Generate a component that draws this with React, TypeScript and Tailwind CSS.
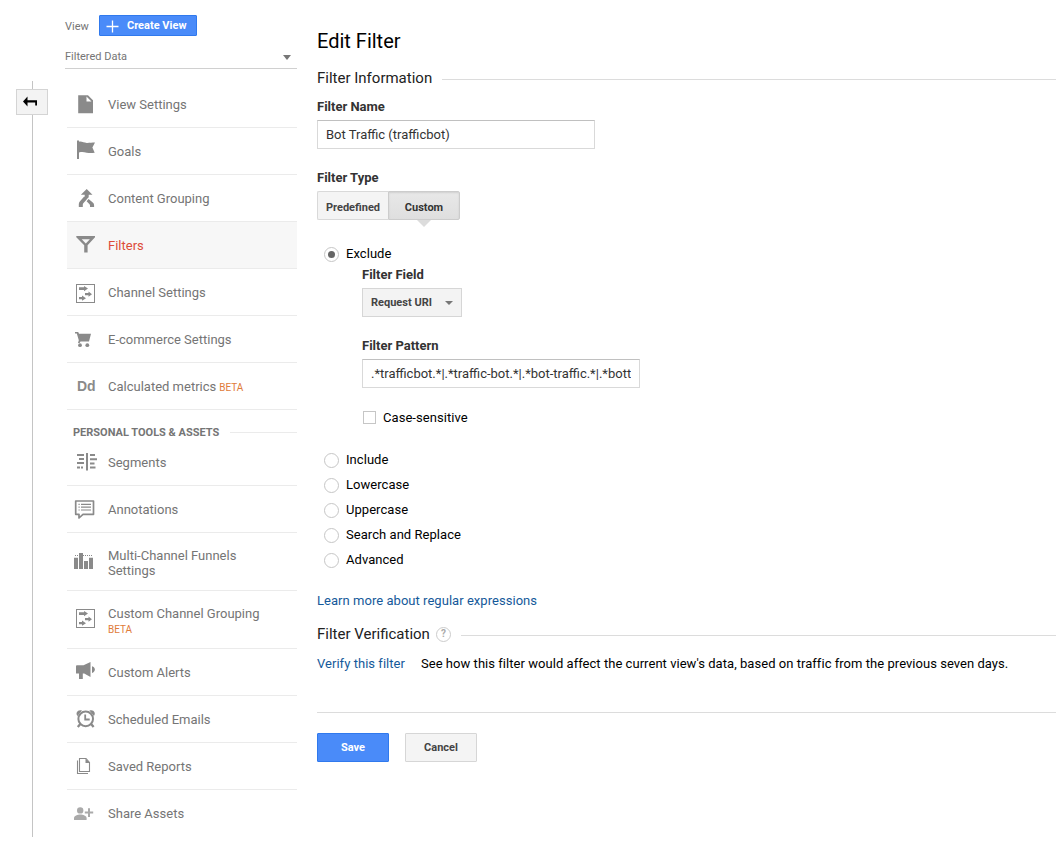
import React, { useState } from 'react';
import clsx from 'clsx';

type IconProps = { children: React.ReactNode };

function Icon({ children }: IconProps) {
  return (
    <svg width="24" height="24" viewBox="0 0 24 24" fill="currentColor" className="ml-1.5 shrink-0">
      {children}
    </svg>
  );
}

const channelIcon = (
  <Icon>
    <rect x="3.5" y="4.5" width="18" height="18" fill="none" stroke="currentColor" />
    <path d="M6 7.300h5V6l4 2.600-4 2.600V9.900H6zM12 13.100h3.500v-1.500l3.500 2.600-3.500 2.600v-1.500H12zM6 17.100h3v-1.500l4 2.600-4 2.600v-1.500H6z" />
  </Icon>
);

const icons = {
  file: (
    <Icon>
      <path d="M5.200 3.200H15l5 5v13H5.200zM13.500 4.500v5h5z" fillRule="evenodd" />
    </Icon>
  ),
  flag: (
    <Icon>
      <path d="M4 1.500h2v1.200c3-.6 5 1.300 8 1.200 3 0 5-.4 8-.4l-2.600 5 2.300 5.200c-3 .5-5 .6-8 0-3-.7-5-.9-7.700-.2V20H4z" />
    </Icon>
  ),
  merge: (
    <Icon>
      <path d="M13.700 3l5.800 5.700h-3.800v2.600l-2 1.900-2-1.900V8.700H7.900zM11.200 10.600l2.700 2.700-3.600 4c-.4.400-.5.900-.5 1.600V21H5.800v-2.800c0-1.100.3-1.900 1-2.600zM15.600 13l3.900 3.300c1.100.9 1.600 1.700 1.600 3.100V21H17v-1.400c0-.8-.2-1.200-.7-1.700l-2.700-2.700z" />
    </Icon>
  ),
  filter: (
    <Icon>
      <path d="M3.300 3H22v1.200l-7.400 8v7.300h-3.400v-7.300l-7.900-8zM8.700 6.200l4.100 4.300 4.100-4.300z" fillRule="evenodd" />
    </Icon>
  ),
  channel: channelIcon,
  cart: (
    <Icon>
      <path d="M2 5h3.200l.8 1.800h12L16 14.500H7.500L6.500 16H5l.8-2.700L3.800 6.600H2z" />
      <circle cx="7" cy="18.200" r="1.900" />
      <circle cx="14.300" cy="18.200" r="1.900" />
    </Icon>
  ),
  metric: (
    <span className="ml-1.5 flex h-6 w-6 shrink-0 items-center pl-1 font-['Liberation_Sans',sans-serif] text-sm font-bold">Dd</span>
  ),
  segments: (
    <Icon>
      <path d="M4 4h7v2H4zM6 8h5v2H6zM4 12h7v2H4zM4 16.500h3v2H4zM8 16.500h2v2H8zM13 3h2v17.500h-2zM17 4h5v2h-5zM17 8.300h7v2h-7zM17 12.500h4.500v2H17zM17 16.500h5.500v2H17z" />
    </Icon>
  ),
  note: (
    <Icon>
      <path d="M2.700 4h17.800v13.300H10L6 21v-3.700H2.700z" fill="none" stroke="currentColor" strokeWidth="1.700" strokeLinejoin="round" />
      <path d="M5.500 6.800h1.200v1.200H5.500zM8 6.800h10v1.200H8zM5.500 9.600h1.200v1.200H5.500zM8 9.600h10v1.200H8zM5.500 12.400h1.200v1.200H5.500zM8 12.400h10v1.200H8z" />
    </Icon>
  ),
  bars: (
    <Icon>
      <path d="M1 10.700h4V22H1zM6 6h4v16H6zM11 14h4v8h-4zM16 10.700h4V22h-4z" />
      <path d="M2 8.500h18" stroke="currentColor" strokeDasharray="1 1" />
    </Icon>
  ),
  alert: (
    <Icon>
      <path d="M3 6.500c0-.8.400-1.200 1.200-1.200h6.300L17.500 2v15l-6.300-3.400H9.800V19H6v-5.400H3zM19 6.200c1.800.6 2.900 1.700 2.900 3.300S20.800 12.300 19 13z" />
    </Icon>
  ),
  alarm: (
    <Icon>
      <circle cx="12.700" cy="11.900" r="7.300" fill="none" stroke="currentColor" strokeWidth="2" />
      <path d="M12.200 7.500v5h4.500" fill="none" stroke="currentColor" strokeWidth="1.800" />
      <path d="M7.300 17l-2.500 3M18.100 17l2.500 3" stroke="currentColor" strokeWidth="2.300" />
      <path d="M4.500 8.900C1.900 5.700 5.200 1.800 9 3.600zM20.900 8.900c2.600-3.200-.7-7.100-4.500-5.300z" />
    </Icon>
  ),
  reports: (
    <Icon>
      <path d="M6.500 4.500h6.500l3.500 4v9h-10zM4.500 6.500v13h10.500" fill="none" stroke="currentColor" strokeWidth="1.100" />
      <path d="M12.500 4.500v4.500h4.500z" />
    </Icon>
  ),
  share: (
    <Icon>
      <g fill="#aaa">
        <circle cx="7.200" cy="9.400" r="3.200" />
        <path d="M1 19v-1.800c0-2.400 3.600-3.600 6.300-3.600s6.300 1.200 6.300 3.600V19z" />
        <path d="M15 7.200h2v3.200h3.200v2H17V16h-2v-3.600h-3.200v-2H15z" />
      </g>
    </Icon>
  ),
};

interface MenuItem {
  id: keyof typeof icons;
  key: string;
  label: string;
  beta?: 'inline' | 'below';
  tall?: boolean;
}

const viewItems: MenuItem[] = [
  { key: 'settings', id: 'file', label: 'View Settings' },
  { key: 'goals', id: 'flag', label: 'Goals' },
  { key: 'grouping', id: 'merge', label: 'Content Grouping' },
  { key: 'filters', id: 'filter', label: 'Filters' },
  { key: 'channels', id: 'channel', label: 'Channel Settings' },
  { key: 'ecommerce', id: 'cart', label: 'E-commerce Settings' },
  { key: 'metrics', id: 'metric', label: 'Calculated metrics', beta: 'inline' },
];

const personalItems: MenuItem[] = [
  { key: 'segments', id: 'segments', label: 'Segments' },
  { key: 'annotations', id: 'note', label: 'Annotations' },
  { key: 'funnels', id: 'bars', label: 'Multi-Channel Funnels Settings', tall: true },
  { key: 'custom-grouping', id: 'channel', label: 'Custom Channel Grouping', beta: 'below', tall: true },
  { key: 'alerts', id: 'alert', label: 'Custom Alerts' },
  { key: 'emails', id: 'alarm', label: 'Scheduled Emails' },
  { key: 'reports', id: 'reports', label: 'Saved Reports' },
  { key: 'assets', id: 'share', label: 'Share Assets' },
];

function Menu({ items, active, onSelect }: { items: MenuItem[]; active: string; onSelect: (key: string) => void }) {
  return (
    <ul className="ml-0.5">
      {items.map((item) => (
        <li
          key={item.key}
          onClick={() => onSelect(item.key)}
          className={clsx(
            'flex cursor-pointer items-start border-b border-[#ebebeb] text-[#8a8a8a]',
            item.tall ? 'h-[58px] pt-3.5' : 'h-[47px] pt-[11px]',
            item.key === active && 'bg-[#f7f7f7]',
            item.key === 'assets' && 'border-b-0'
          )}
        >
          {icons[item.id]}
          <span
            className={clsx(
              'ml-[11px] w-[160px] text-[13px] leading-[15px]',
              item.tall ? 'mt-px' : 'mt-[5px]',
              item.key === active ? 'text-[#dd4b39]' : 'text-[#757575]'
            )}
          >
            {item.label}
            {item.beta === 'inline' && <span className="ml-[3px] text-[10px] text-[#e07b39]">BETA</span>}
            {item.beta === 'below' && <span className="mt-px block text-[10px] text-[#e07b39]">BETA</span>}
          </span>
        </li>
      ))}
    </ul>
  );
}

function Radio({ label, checked, onChange }: { label: string; checked: boolean; onChange: () => void }) {
  return (
    <label className="flex h-4 cursor-pointer items-center pl-[7px]">
      <input type="radio" className="sr-only" checked={checked} onChange={onChange} />
      <span className="mt-px flex size-[15px] items-center justify-center rounded-full border border-[#c6c6c6]">
        {checked && <span className="size-[7px] rounded-full bg-[#666]" />}
      </span>
      <span className="ml-[7px] tracking-[0.05px]">{label}</span>
    </label>
  );
}

function SectionTitle({ children }: { children: React.ReactNode }) {
  return (
    <div className="flex h-5 items-center">
      <h2 className="flex items-center text-[15px] leading-5 text-[#222]">{children}</h2>
      <div className="mt-[3px] ml-2.5 h-px flex-1 bg-[#dcdcdc]" />
    </div>
  );
}

const radioOptions = ['Include', 'Lowercase', 'Uppercase', 'Search and Replace', 'Advanced'];

export default function App() {
  const [section, setSection] = useState('filters');
  const [mode, setMode] = useState('Exclude');
  const [name, setName] = useState('Bot Traffic (trafficbot)');
  const [pattern, setPattern] = useState('.*trafficbot.*|.*traffic-bot.*|.*bot-traffic.*|.*bott');

  return (
    <div className="flex h-[850px] w-[1056px] overflow-hidden bg-white font-[Roboto,sans-serif] text-[13px] leading-4 text-black">
      {/* Collapse rail */}
      <div className="flex w-[65px] shrink-0 flex-col pt-[81px]">
        <div className="ml-8 h-2 w-px bg-[#c4c4c4]" />
        <button className="ml-4 flex h-[26px] w-8 items-center justify-center border border-[#d4d4d4] bg-[#f3f3f3]">
          <svg width="16" height="12" viewBox="0 0 16 12" className="mr-1">
            <path d="M1 5.500L5.500 0.500V4.300H15V9.500H13.200V6.500H5.500V10.500z" />
          </svg>
        </button>
        <div className="ml-8 h-[722px] w-px bg-[#c4c4c4]" />
      </div>

      {/* Sidebar */}
      <aside className="w-[232px] shrink-0">
        <div className="flex items-center pt-[15px] text-[11px] text-[#757575]">
          <span className="w-[34px] pt-0.5">View</span>
          <button className="flex h-[21px] w-[98px] items-center rounded-[1px] border border-[#3079ed] bg-[#4a8bf9] pt-px font-bold text-white">
            <svg width="13" height="13" viewBox="0 0 13 13" className="ml-1.5">
              <path d="M6.500 0.500v12M0.500 6.500h12" stroke="#fff" strokeWidth="1.300" />
            </svg>
            <span className="ml-2">Create View</span>
          </button>
        </div>
        <div className="mt-[13px] flex h-5 items-start justify-between border-b border-[#d0d0d0] text-[11px] text-[#757575]">
          <span>Filtered Data</span>
          <span className="mt-1.5 mr-1.5 border-x-4 border-t-[5px] border-x-transparent border-t-[#777]" />
        </div>

        <div className="mt-3">
          <Menu items={viewItems} active={section} onSelect={setSection} />
        </div>
        <div className="mt-[15px] mb-[-1px] flex h-[15px] items-center pl-2">
          <h3 className="text-[11px] font-bold text-[#757575]">PERSONAL TOOLS &amp; ASSETS</h3>
          <div className="mb-px ml-[11px] h-px flex-1 bg-[#ebebeb]" />
        </div>
        <Menu items={personalItems} active={section} onSelect={setSection} />
      </aside>

      {/* Filter form */}
      <main className="ml-5 flex-1">
        <h1 className="mt-[29px] text-xl leading-6">Edit Filter</h1>

        <div className="mt-[15px]">
          <SectionTitle>Filter Information</SectionTitle>
        </div>

        <div className="mt-[11px] font-bold text-[#333]">Filter Name</div>
        <input
          value={name}
          onChange={(e) => setName(e.target.value)}
          className="mt-[5px] block h-[29px] w-[278px] border border-[#d9d9d9] border-t-[#c0c0c0] px-2 text-[#333] outline-none"
        />

        <div className="mt-[21px] font-bold text-[#333]">Filter Type</div>
        <div className="mt-[5px] flex h-[29px] text-[11px] font-bold text-[#444]">
          <button className="w-[71px] rounded-l-[2px] border border-r-0 border-[#d9d9d9] bg-[#f4f4f4] pt-1">Predefined</button>
          <button className="relative w-[72px] rounded-r-[2px] border border-[#ccc] bg-linear-to-b from-[#e8e8e8] to-[#dfdfdf] pt-1 text-[#333] shadow-[inset_0_1px_2px_rgba(0,0,0,0.1)]">
            Custom
            <span className="absolute top-7 left-7 border-x-[7px] border-t-[7px] border-x-transparent border-t-[#dcdcdc]" />
          </button>
        </div>

        <div className="mt-[26px]">
          <Radio label="Exclude" checked={mode === 'Exclude'} onChange={() => setMode('Exclude')} />
        </div>
        <div className="pl-[45px]">
          <div className="mt-[5px] font-bold text-[#333]">Filter Field</div>
          <button className="mt-[5px] flex h-[29px] w-[100px] items-center justify-between border border-[#d6d6d6] bg-[#f3f3f3] px-2 text-[11px] font-bold text-[#444]">
            Request URI
            <span className="border-x-4 border-t-4 border-x-transparent border-t-[#777]" />
          </button>

          <div className="mt-[21px] font-bold text-[#333]">Filter Pattern</div>
          <input
            value={pattern}
            onChange={(e) => setPattern(e.target.value)}
            className="mt-[5px] block h-[29px] w-[278px] border border-[#d9d9d9] border-t-[#c0c0c0] px-2 text-[#333] outline-none"
          />

          <label className="mt-[22px] flex h-4 items-center">
            <span className="mb-0.5 ml-px size-[13px] border border-[#c6c6c6]" />
            <span className="ml-[7px] tracking-[0.05px]">Case-sensitive</span>
          </label>
        </div>

        <div className="mt-[26px] flex flex-col gap-[9px]">
          {radioOptions.map((option) => (
            <Radio key={option} label={option} checked={mode === option} onChange={() => setMode(option)} />
          ))}
        </div>

        <a className="mt-[25px] block tracking-[0.04px] text-[#15599a]">Learn more about regular expressions</a>

        <div className="mt-[15px]">
          <SectionTitle>
            Filter Verification
            <span className="ml-1.5 flex size-[15px] items-center justify-center rounded-full border border-[#ccc] text-[10px] leading-none font-bold text-[#aaa]">
              ?
            </span>
          </SectionTitle>
        </div>
        <div className="mt-3 flex tracking-[0.04px]">
          <a className="text-[#15599a]">Verify this filter</a>
          <span className="ml-4">
            See how this filter would affect the current view's data, based on traffic from the previous seven days.
          </span>
        </div>

        <div className="mt-10 flex gap-4 border-t border-[#dcdcdc] pt-5 text-[11px] font-bold">
          <button className="h-[29px] w-[72px] rounded-[1px] border border-[#3079ed] bg-[#4a8bf9] text-white">Save</button>
          <button className="h-[29px] w-[72px] rounded-[1px] border border-[#d6d6d6] bg-[#f4f4f4] text-[#444]">Cancel</button>
        </div>
      </main>
    </div>
  );
}
